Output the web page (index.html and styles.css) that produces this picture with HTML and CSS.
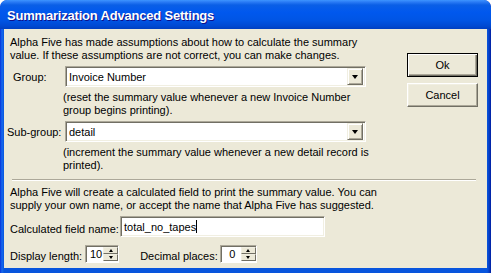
FILE: index.html
```html
<!DOCTYPE html>
<html lang="en">
<head>
    <meta charset="UTF-8">
    <meta name="viewport" content="width=device-width, initial-scale=1.0">
    <title>Summarization Advanced Settings</title>
    <link rel="stylesheet" href="styles.css">
</head>
<body>
    <div class="ventana">
        <div class="barra-titulo">
            <span class="titulo">Summarization Advanced Settings</span>
        </div>
        <div class="cliente">
            <div class="seccion-superior">
                <div class="ajustes">
                    <p class="texto intro">Alpha Five has made assumptions about how to calculate the summary<br>value. If these assumptions are not correct, you can make changes.</p>

                    <div class="fila-campo">
                        <label class="etiqueta etiqueta-grupo">Group:</label>
                        <div class="combo">
                            <span class="combo-valor">Invoice Number</span>
                            <span class="combo-boton"><span class="flecha-abajo"></span></span>
                        </div>
                    </div>
                    <p class="texto pista">(reset the summary value whenever a new Invoice Number<br>group begins printing).</p>

                    <div class="fila-campo fila-sub">
                        <label class="etiqueta etiqueta-sub">Sub-group:</label>
                        <div class="combo">
                            <span class="combo-valor">detail</span>
                            <span class="combo-boton"><span class="flecha-abajo"></span></span>
                        </div>
                    </div>
                    <p class="texto pista">(increment the summary value whenever a new detail record is<br>printed).</p>
                </div>

                <div class="botones">
                    <button class="boton predeterminado">Ok</button>
                    <button class="boton">Cancel</button>
                </div>
            </div>

            <div class="separador"></div>

            <div class="seccion-inferior">
                <p class="texto intro">Alpha Five will create a calculated field to print the summary value. You can<br>supply your own name, or accept the name that Alpha Five has suggested.</p>

                <div class="fila-nombre">
                    <label class="etiqueta">Calculated field name:</label>
                    <div class="caja-texto">total_no_tapes<span class="cursor"></span></div>
                </div>

                <div class="fila-numeros">
                    <label class="etiqueta">Display length:</label>
                    <div class="giratorio giratorio-largo">
                        <span class="giratorio-valor">10</span>
                        <span class="giratorio-botones">
                            <span class="mini-boton"><span class="flecha-arriba"></span></span>
                            <span class="mini-boton"><span class="flecha-abajo pequena"></span></span>
                        </span>
                    </div>
                    <label class="etiqueta etiqueta-decimales">Decimal places:</label>
                    <div class="giratorio giratorio-decimal">
                        <span class="giratorio-valor">0</span>
                        <span class="giratorio-botones">
                            <span class="mini-boton"><span class="flecha-arriba"></span></span>
                            <span class="mini-boton"><span class="flecha-abajo pequena"></span></span>
                        </span>
                    </div>
                </div>
            </div>
        </div>
    </div>
</body>
</html>
```

FILE: styles.css
```css
body {
    margin: 0;
    font-family: "Liberation Sans", Arial, sans-serif;
    font-size: 11px;
    color: #000;
}

.ventana {
    width: 491px;
    height: 273px;
    display: flex;
    flex-direction: column;
    background: linear-gradient(to right, #0831d9 0, #166aee 2px, #0855dd 4px, #0855dd 487px, #0640c8 489px, #001ea0 491px);
    border-radius: 7px 7px 0 0;
    overflow: hidden;
}

/* Barra de titulo estilo XP */
.barra-titulo {
    height: 29px;
    flex-shrink: 0;
    display: flex;
    align-items: center;
    padding-left: 7px;
    background: linear-gradient(to bottom, #3d95ff 0, #2a7bf5 2px, #0a5fe6 5px, #0058ee 12px, #0055e5 20px, #0049d2 26px, #003fc0 29px);
    border-radius: 7px 7px 0 0;
}

.titulo {
    color: #fff;
    font-weight: bold;
    font-size: 13px;
    letter-spacing: -0.2px;
    text-shadow: 1px 1px #0f1089;
    margin-top: 2px;
}

.cliente {
    flex: 1;
    margin: 0 4px 5px 4px;
    background: #ece9d8;
    padding: 7px 0 0 6px;
}

.texto {
    margin: 0;
    line-height: 13px;
    white-space: nowrap;
}

.seccion-superior {
    display: flex;
}

.ajustes {
    width: 391px;
}

.fila-campo {
    display: flex;
    align-items: center;
    height: 21px;
    margin-top: 4px;
}

.fila-sub {
    margin-top: 4px;
}

.etiqueta {
    white-space: nowrap;
}

.etiqueta-grupo {
    width: 52px;
    padding-left: 3px;
}

.etiqueta-sub {
    width: 58px;
    margin-left: -3px;
}

.combo {
    width: 301px;
    height: 21px;
    box-sizing: border-box;
    display: flex;
    align-items: center;
    background: #fff;
    border: 1px solid;
    border-color: #aca899 #fff #fff #aca899;
    box-shadow: inset 1px 1px #716f64, inset -1px -1px #f1efe2;
    padding: 2px;
}

.combo-valor {
    flex: 1;
    padding-left: 1px;
}

.combo-boton {
    width: 16px;
    height: 17px;
    box-sizing: border-box;
    display: flex;
    align-items: center;
    justify-content: center;
    background: #ece9d8;
    border: 1px solid;
    border-color: #f1efe2 #716f64 #716f64 #f1efe2;
    box-shadow: inset 1px 1px #fff, inset -1px -1px #aca899;
}

.flecha-abajo {
    width: 0;
    height: 0;
    border-left: 3.5px solid transparent;
    border-right: 3.5px solid transparent;
    border-top: 4px solid #000;
}

.flecha-abajo.pequena {
    border-left-width: 2.5px;
    border-right-width: 2.5px;
    border-top-width: 3px;
}

.flecha-arriba {
    width: 0;
    height: 0;
    border-left: 2.5px solid transparent;
    border-right: 2.5px solid transparent;
    border-bottom: 3px solid #000;
}

.pista {
    margin-left: 53px;
    margin-top: 4px;
}

/* Botones Ok / Cancel */
.botones {
    display: flex;
    flex-direction: column;
    gap: 6px;
    margin-top: 17px;
    margin-left: 6px;
}

.boton {
    width: 71px;
    height: 24px;
    box-sizing: border-box;
    font-family: "Liberation Sans", Arial, sans-serif;
    font-size: 11px;
    color: #000;
    background: #ece9d8;
    border: 1px solid;
    border-color: #fff #716f64 #716f64 #fff;
    box-shadow: inset -1px -1px #aca899, inset 1px 1px #f1efe2;
    padding: 0;
}

.boton.predeterminado {
    border: 1px solid #000;
    box-shadow: inset 1px 1px #fff, inset -1px -1px #716f64, inset -2px -2px #aca899;
}

.separador {
    height: 1px;
    width: 464px;
    margin: 7px 0 0 2px;
    background: #aca899;
    border-bottom: 1px solid #fff;
}

.seccion-inferior .intro {
    margin-top: 5px;
}

.fila-nombre {
    display: flex;
    align-items: center;
    margin-top: 4px;
}

.fila-nombre .etiqueta {
    width: 110px;
    padding-top: 5px;
}

.caja-texto {
    width: 205px;
    height: 21px;
    box-sizing: border-box;
    display: flex;
    align-items: center;
    background: #fff;
    border: 1px solid;
    border-color: #aca899 #fff #fff #aca899;
    box-shadow: inset 1px 1px #716f64, inset -1px -1px #f1efe2;
    padding-left: 3px;
}

.cursor {
    display: inline-block;
    width: 1px;
    height: 13px;
    background: #000;
}

.fila-numeros {
    display: flex;
    align-items: center;
    margin-top: 8px;
}

.fila-numeros .etiqueta {
    padding-top: 3px;
}

.giratorio {
    height: 18px;
    box-sizing: border-box;
    display: flex;
    background: #fff;
    border: 1px solid;
    border-color: #aca899 #fff #fff #aca899;
    box-shadow: inset 1px 1px #716f64;
    margin-left: 3px;
}

.giratorio-largo {
    width: 34px;
}

.giratorio-decimal {
    width: 37px;
    margin-left: 2px;
}

.etiqueta-decimales {
    margin-left: 21px;
}

.giratorio-valor {
    flex: 1;
    text-align: right;
    padding: 2px 1px 0 0;
    line-height: 13px;
}

.giratorio-decimal .giratorio-valor {
    text-align: center;
    padding-left: 4px;
}

.giratorio-botones {
    width: 15px;
    display: flex;
    flex-direction: column;
    padding: 1px 0;
}

.mini-boton {
    flex: 1;
    box-sizing: border-box;
    display: flex;
    align-items: center;
    justify-content: center;
    background: #ece9d8;
    border: 1px solid;
    border-color: #f1efe2 #716f64 #716f64 #f1efe2;
}
```
